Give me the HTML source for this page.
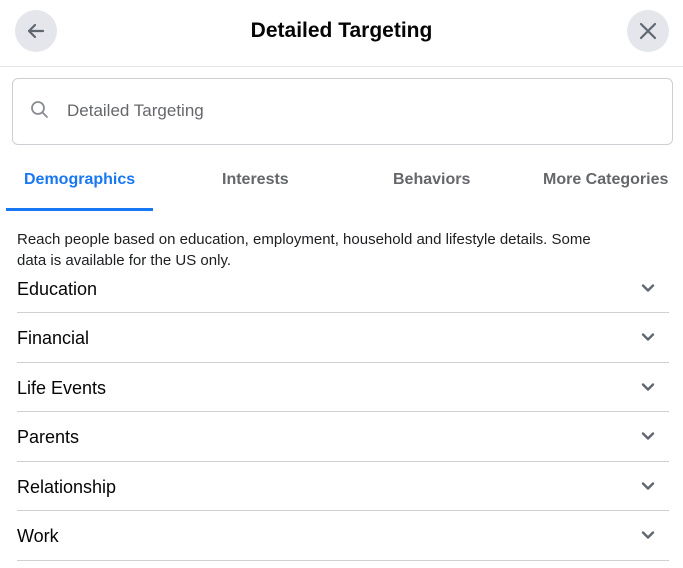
<!DOCTYPE html>
<html><head><style>
body{margin:0;width:683px;height:568px;background:#fff;font-family:"Liberation Sans",sans-serif;position:relative;overflow:hidden}
.a{position:absolute}
.circ{width:42px;height:42px;border-radius:50%;background:#e4e6eb;top:10px}
.title{top:19px;left:0;width:683px;text-align:center;font-size:21px;font-weight:bold;color:#050505}
.hdr{top:66px;left:0;width:683px;height:1px;background:#e4e6eb}
.search{left:12px;top:78px;width:659px;height:65px;border:1px solid #ccd0d5;border-radius:6px}
.ph{left:67px;top:101px;font-size:17px;color:#65676b}
.tab{top:171px;font-size:16px;font-weight:bold;color:#65676b}
.row{left:17px;font-size:18px;color:#050505}
.line{left:17px;width:652px;height:1px;background:#ced0d4}
.chev{left:640px}
</style></head><body>
<div class="a circ" style="left:15px"></div>
<svg class="a" style="left:26px;top:21px" width="20" height="20" viewBox="0 0 20 20"><path d="M17 10H3M9 4L3 10L9 16" stroke="#606770" stroke-width="2.2" fill="none" stroke-linecap="round" stroke-linejoin="round"/></svg>
<div class="a circ" style="left:627px"></div>
<svg class="a" style="left:638px;top:21px" width="20" height="20" viewBox="0 0 20 20"><path d="M3 3L17 17M17 3L3 17" stroke="#606770" stroke-width="2.2" stroke-linecap="round"/></svg>
<div class="a title">Detailed Targeting</div>
<div class="a hdr"></div>
<div class="a search"></div>
<svg class="a" style="left:30px;top:100px" width="20" height="20" viewBox="0 0 20 20"><circle cx="8" cy="8" r="6" stroke="#8a8d91" stroke-width="1.8" fill="none"/><path d="M12.5 12.5L17 17" stroke="#8a8d91" stroke-width="1.8" stroke-linecap="round"/></svg>
<div class="a ph">Detailed Targeting</div>
<div class="a tab" style="left:24px;color:#1877f2">Demographics</div>
<div class="a tab" style="left:222px">Interests</div>
<div class="a tab" style="left:393px">Behaviors</div>
<div class="a tab" style="left:543px">More Categories</div>
<div class="a" style="left:6px;top:208px;width:147px;height:3px;background:#1877f2"></div>
<div class="a" style="left:17px;top:229px;width:585px;font-size:15px;line-height:21px;color:#1c1e21">Reach people based on education, employment, household and lifestyle details. Some data is available for the US only.</div>
<div class="a row" style="top:279px">Education</div>
<div class="a row" style="top:328px">Financial</div>
<div class="a row" style="top:378px">Life Events</div>
<div class="a row" style="top:427px">Parents</div>
<div class="a row" style="top:477px">Relationship</div>
<div class="a row" style="top:526px">Work</div>
<div class="a line" style="top:312px"></div>
<div class="a line" style="top:362px"></div>
<div class="a line" style="top:411px"></div>
<div class="a line" style="top:461px"></div>
<div class="a line" style="top:510px"></div>
<div class="a line" style="top:560px"></div>
<svg class="a chev" style="top:280px" width="16" height="16" viewBox="0 0 16 16"><path d="M3 5.5L8 10.5L13 5.5" stroke="#606770" stroke-width="2.4" fill="none" stroke-linecap="round" stroke-linejoin="round"/></svg>
<svg class="a chev" style="top:329px" width="16" height="16" viewBox="0 0 16 16"><path d="M3 5.5L8 10.5L13 5.5" stroke="#606770" stroke-width="2.4" fill="none" stroke-linecap="round" stroke-linejoin="round"/></svg>
<svg class="a chev" style="top:379px" width="16" height="16" viewBox="0 0 16 16"><path d="M3 5.5L8 10.5L13 5.5" stroke="#606770" stroke-width="2.4" fill="none" stroke-linecap="round" stroke-linejoin="round"/></svg>
<svg class="a chev" style="top:428px" width="16" height="16" viewBox="0 0 16 16"><path d="M3 5.5L8 10.5L13 5.5" stroke="#606770" stroke-width="2.4" fill="none" stroke-linecap="round" stroke-linejoin="round"/></svg>
<svg class="a chev" style="top:478px" width="16" height="16" viewBox="0 0 16 16"><path d="M3 5.5L8 10.5L13 5.5" stroke="#606770" stroke-width="2.4" fill="none" stroke-linecap="round" stroke-linejoin="round"/></svg>
<svg class="a chev" style="top:527px" width="16" height="16" viewBox="0 0 16 16"><path d="M3 5.5L8 10.5L13 5.5" stroke="#606770" stroke-width="2.4" fill="none" stroke-linecap="round" stroke-linejoin="round"/></svg>
</body></html>
